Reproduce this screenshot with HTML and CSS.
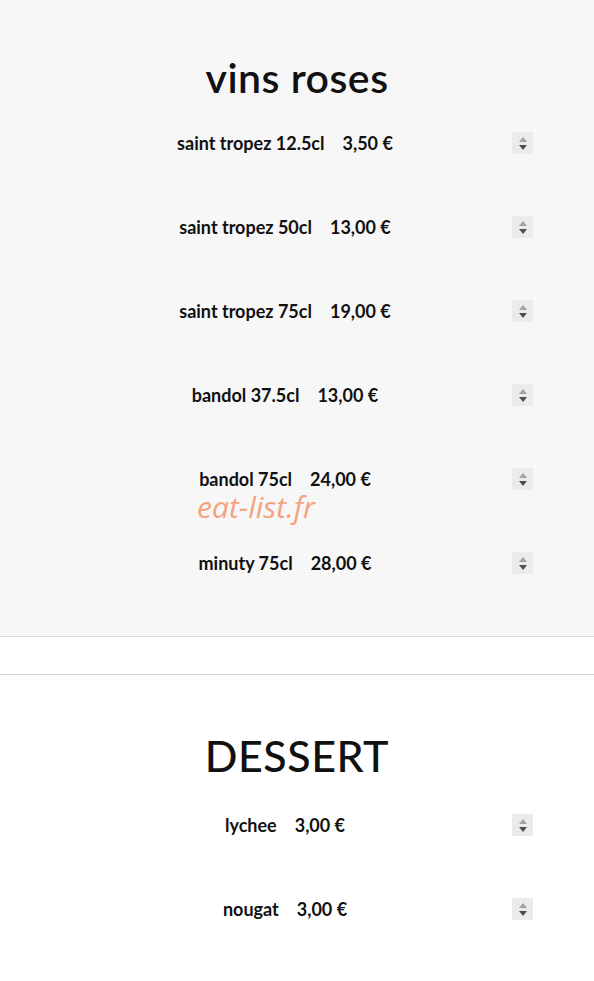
FILE: index.html
```html
<!DOCTYPE html>
<html lang="fr">
  <head>
    <meta charset="utf-8">
    <title>Carte</title>
    <link rel="stylesheet" href="styles.css">
  </head>
  <body>

    <!-- vins roses -->
    <section class="menuSection greySection">
      <h2 class="sectionTitle">vins roses</h2>
      <div class="itemRow">
        <p class="itemText">saint tropez 12.5cl<span class="price">3,50 €</span></p>
        <div class="spinBox"><span class="spinUp"></span><span class="spinDown"></span></div>
      </div>
      <div class="itemRow">
        <p class="itemText">saint tropez 50cl<span class="price">13,00 €</span></p>
        <div class="spinBox"><span class="spinUp"></span><span class="spinDown"></span></div>
      </div>
      <div class="itemRow">
        <p class="itemText">saint tropez 75cl<span class="price">19,00 €</span></p>
        <div class="spinBox"><span class="spinUp"></span><span class="spinDown"></span></div>
      </div>
      <div class="itemRow">
        <p class="itemText">bandol 37.5cl<span class="price">13,00 €</span></p>
        <div class="spinBox"><span class="spinUp"></span><span class="spinDown"></span></div>
      </div>
      <div class="itemRow">
        <p class="itemText">bandol 75cl<span class="price">24,00 €</span></p>
        <div class="spinBox"><span class="spinUp"></span><span class="spinDown"></span></div>
        <span class="watermark">eat-list.fr</span>
      </div>
      <div class="itemRow">
        <p class="itemText">minuty 75cl<span class="price">28,00 €</span></p>
        <div class="spinBox"><span class="spinUp"></span><span class="spinDown"></span></div>
      </div>
    </section>

    <div class="spacer"></div>

    <!-- dessert -->
    <section class="menuSection dessertSection">
      <h2 class="sectionTitle caps">DESSERT</h2>
      <div class="itemRow">
        <p class="itemText">lychee<span class="price">3,00 €</span></p>
        <div class="spinBox"><span class="spinUp"></span><span class="spinDown"></span></div>
      </div>
      <div class="itemRow">
        <p class="itemText">nougat<span class="price">3,00 €</span></p>
        <div class="spinBox"><span class="spinUp"></span><span class="spinDown"></span></div>
      </div>
    </section>

  </body>
</html>
```

FILE: styles.css
```css
body {
  margin: 0;
  background-color: #ffffff;
  font-family: Lato, "Liberation Sans", sans-serif;
  color: #111111;
}

.menuSection {
  padding: 56px 0 0 0;
}

.greySection {
  background-color: #f7f7f7;
  border-bottom: 1px solid #d6d6d6;
}

.dessertSection {
  padding-top: 59px;
}

.spacer {
  height: 37px;
  border-bottom: 1px solid #d6d6d6;
}

.sectionTitle {
  margin: 0 0 32px 0;
  text-align: center;
  font-size: 41px;
  font-weight: 600;
  line-height: 44px;
  letter-spacing: 0.5px;
}

.sectionTitle.caps {
  margin-bottom: 36px;
  font-size: 43px;
  font-weight: 500;
}

.itemRow {
  position: relative;
  display: grid;
  grid-template-columns: 1fr 21px;
  column-gap: 2px;
  align-items: center;
  align-content: start;
  height: 84px;
  padding: 0 61px 0 60px;
}

.itemText {
  margin: 0;
  text-align: center;
  font-size: 18px;
  font-weight: 700;
  line-height: 22px;
}

.price {
  margin-left: 18px;
}

.spinBox {
  display: flex;
  flex-direction: column;
  align-items: center;
  justify-content: center;
  gap: 3px;
  height: 22px;
  background-color: #ebebeb;
}

.spinUp {
  width: 0;
  height: 0;
  border-left: 4px solid transparent;
  border-right: 4px solid transparent;
  border-bottom: 5px solid #a3a3a3;
}

.spinDown {
  width: 0;
  height: 0;
  border-left: 4px solid transparent;
  border-right: 4px solid transparent;
  border-top: 5px solid #4d4d4d;
}

.watermark {
  position: absolute;
  left: 197px;
  top: 24px;
  font-family: "Open Sans", sans-serif;
  font-style: italic;
  font-size: 30px;
  line-height: 30px;
  color: #f5a27f;
}
```
